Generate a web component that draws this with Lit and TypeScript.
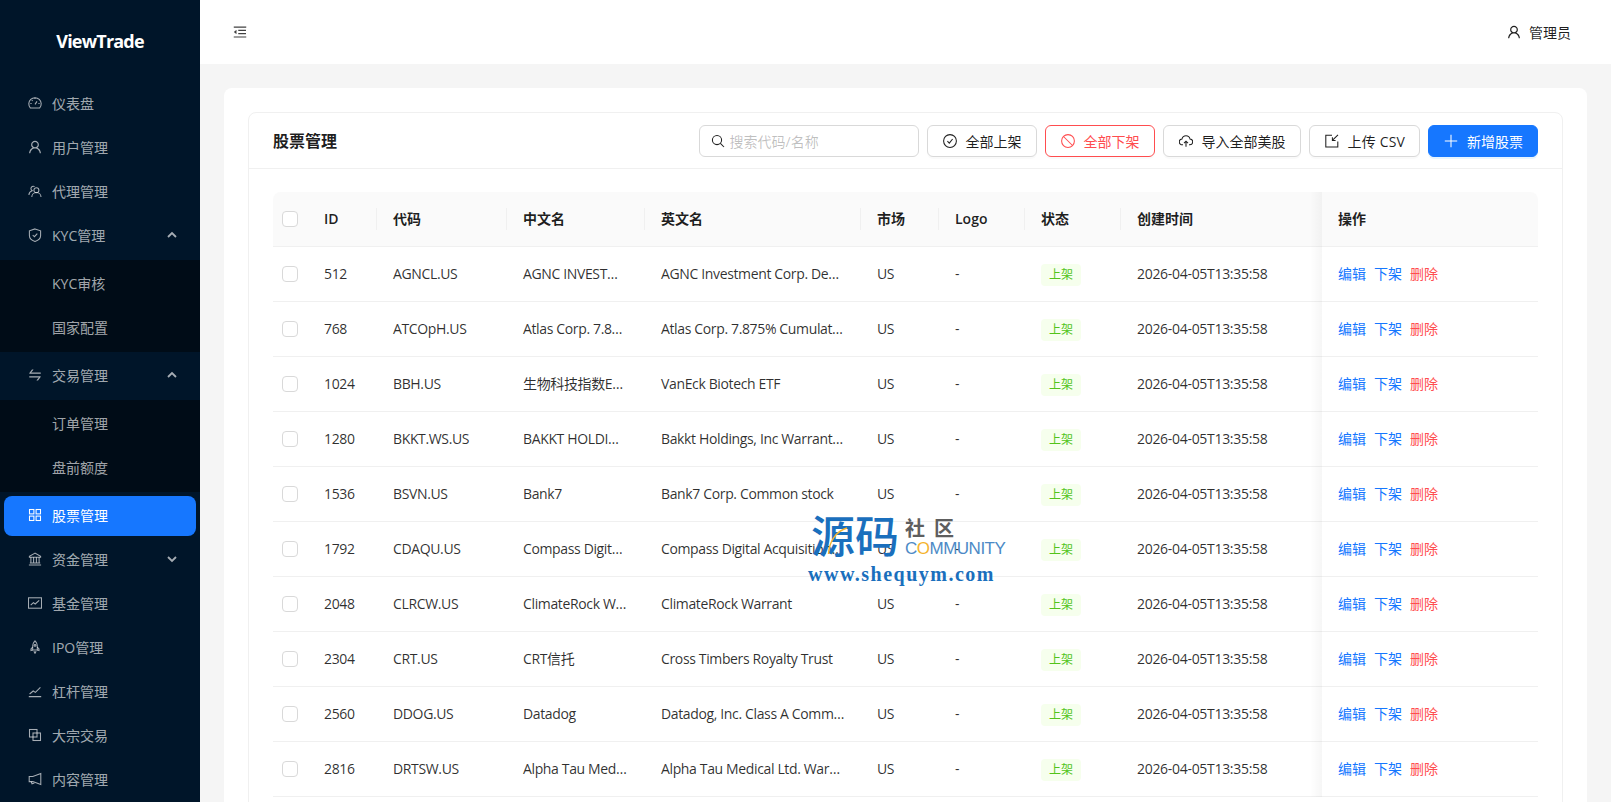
import { LitElement, css, html, svg } from 'lit';
import { customElement } from 'lit/decorators.js';

// Icons drawn on a 14 unit grid with a 1 unit stroke.
const line = (body: unknown, size = 14) => html`<svg class="ico" width=${size} height=${size} viewBox="0 0 14 14" fill="none" stroke="currentColor" stroke-width="1.05">${body}</svg>`;
// Solid icons on the 1024 unit grid.
const solid = (d: string, size = 16) => html`<svg class="ico solid" width=${size} height=${size} viewBox="0 0 1024 1024" fill="currentColor"><path d=${d}></path></svg>`;

const USER_D = 'M858.5 763.6a374 374 0 0 0-80.6-119.5 375.63 375.63 0 0 0-119.5-80.6c-.4-.2-.8-.3-1.2-.5C719.5 518 760 444.7 760 362c0-137-111-248-248-248S264 225 264 362c0 82.7 40.5 156 102.8 201.1-.4.2-.8.3-1.2.5-44.8 18.9-85 46-119.5 80.6a375.63 375.63 0 0 0-80.6 119.5A371.7 371.7 0 0 0 136 901.8a8 8 0 0 0 8 8.2h60c4.4 0 7.9-3.5 8-7.8 2-77.2 33-149.5 87.8-204.3 56.7-56.7 132-87.9 212.2-87.9s155.5 31.2 212.2 87.9C779 752.7 810 825 812 902.2c.1 4.4 3.6 7.8 8 7.8h60a8 8 0 0 0 8-8.2c-1-47.8-10.9-94.3-29.5-138.2zM512 534c-45.9 0-89.1-17.9-121.6-50.4S340 407.9 340 362c0-45.9 17.9-89.1 50.4-121.6S466.1 190 512 190s89.1 17.9 121.6 50.4S684 316.1 684 362c0 45.9-17.9 89.1-50.4 121.6S557.9 534 512 534z';
const SWAP_D = 'M847.9 592H152c-4.4 0-8 3.6-8 8v60c0 4.4 3.6 8 8 8h605.2L612.9 851c-4.1 5.2-.4 13 6.3 13h72.5c4.9 0 9.5-2.2 12.6-6.1l168.8-214.1c16.5-21 1.6-51.8-25.2-51.8zM872 356H266.8l144.3-183c4.1-5.2.4-13-6.3-13h-72.5c-4.9 0-9.5 2.2-12.6 6.1L150.9 380.2c-16.5 21-1.6 51.8 25.1 51.8h696c4.4 0 8-3.6 8-8v-60c0-4.4-3.6-8-8-8z';
const FOLD_D = 'M408 442h480c4.4 0 8-3.6 8-8v-56c0-4.4-3.6-8-8-8H408c-4.4 0-8 3.6-8 8v56c0 4.4 3.6 8 8 8zm-8 204c0 4.4 3.6 8 8 8h480c4.4 0 8-3.6 8-8v-56c0-4.4-3.6-8-8-8H408c-4.4 0-8 3.6-8 8v56zm504-486H120c-4.4 0-8 3.6-8 8v56c0 4.4 3.6 8 8 8h784c4.4 0 8-3.6 8-8v-56c0-4.4-3.6-8-8-8zm0 632H120c-4.4 0-8 3.6-8 8v56c0 4.4 3.6 8 8 8h784c4.4 0 8-3.6 8-8v-56c0-4.4-3.6-8-8-8zM115.4 518.9L271.7 642c5.8 4.6 14.4.5 14.4-6.9V388.9c0-7.4-8.5-11.5-14.4-6.9L115.4 505.1a8.74 8.74 0 0 0 0 13.8z';

const icons = {
  dashboard: line(svg`<path d="M2.3 11.9A6.2 6.2 0 1 1 11.7 11.9Z"/><path d="M7 8.4L9 5.4M7 1.8V3M2.4 7.4H3.6M10.4 7.4H11.6M3.8 4.1L4.6 4.9"/>`),
  user: solid(USER_D),
  team: line(svg`<circle cx="8.4" cy="6.2" r="2.5"/><path d="M3.8 13A4.6 4.6 0 0 1 13 13"/><path d="M6.6 2.6A2.5 2.5 0 0 0 2.9 4.5C2.9 5.5 3.4 6.2 4.2 6.7 2.2 7.3 1 9 .9 11"/>`),
  safety: line(svg`<path d="M7 .9L12.6 2.8V7.4C12.6 10.4 10 12.4 7 13.4 4 12.4 1.4 10.4 1.4 7.4V2.8Z"/><path d="M4.7 7L6.4 8.7 9.3 5.6"/>`),
  swap: solid(SWAP_D),
  store: line(svg`<rect x="1.5" y="1.5" width="4.4" height="4.4"/><rect x="8.1" y="1.5" width="4.4" height="4.4"/><rect x="1.5" y="8.1" width="4.4" height="4.4"/><rect x="8.1" y="8.1" width="4.4" height="4.4"/>`),
  bank: line(svg`<path d="M7 1.1L1.4 4.4V5.3H12.6V4.4Z"/><path d="M2.9 5.3V10.8M5.6 5.3V10.8M8.4 5.3V10.8M11.1 5.3V10.8M1.8 10.9H12.2M.9 12.9H13.1"/>`),
  fund: line(svg`<rect x=".5" y="1.8" width="13" height="10.4"/><path d="M2.7 9.2L5.4 6.6 7.2 8 11.2 4.4"/>`),
  rocket: line(svg`<path d="M7 .8C8.7 2.2 9.3 4 9.3 7V10H4.7V7C4.7 4 5.3 2.2 7 .8Z"/><circle cx="7" cy="5.4" r=".9"/><path d="M4.7 7L3 9V10.6L4.7 10M9.3 7L11 9V10.6L9.3 10M6 11.2C6.3 12.4 6.6 13 7 13.3 7.4 13 7.7 12.4 8 11.2"/>`),
  stock: line(svg`<path d="M.8 12.6H13.2M1.6 10L5.2 7 7.4 8.4 12.4 3.4"/>`),
  block: line(svg`<rect x="1.5" y="1.5" width="7.5" height="7.5"/><rect x="5" y="5" width="7.5" height="7.5"/>`),
  notice: line(svg`<path d="M12.8 1.4V12.4L4.8 9.6H1.2V4.4H4.8Z"/><path d="M3.2 9.6L4 11.8 6.4 11"/>`),
  search: line(svg`<circle cx="6" cy="6" r="4.6"/><path d="M9.4 9.4L13 13"/>`),
  check: line(svg`<circle cx="7" cy="7" r="6.4"/><path d="M4.4 7.2L6.3 9.1 9.6 5"/>`),
  stop: line(svg`<circle cx="7" cy="7" r="6.4"/><path d="M2.5 2.5L11.5 11.5"/>`),
  cloud: line(svg`<path d="M4 10.8H3.4A2.9 2.9 0 0 1 3 5 4.1 4.1 0 0 1 11 5 2.9 2.9 0 0 1 10.6 10.8H10"/><path d="M7 12.8V7.4M5 9.2L7 7.2 9 9.2"/>`),
  csv: line(svg`<path d="M7 1.2H.8V13H12.8V7.5"/><path d="M13 .8L7.6 6.2M7.4 3.2V6.4H10.6"/>`),
  plus: line(svg`<path d="M7 .8V13.2M.8 7H13.2"/>`),
};

const up = html`<svg class="chev" width="10" height="10" viewBox="0 0 10 10" fill="none" stroke="currentColor" stroke-width="1.8"><path d="M1 7L5 3 9 7"></path></svg>`;
const down = html`<svg class="chev" width="10" height="10" viewBox="0 0 10 10" fill="none" stroke="currentColor" stroke-width="1.8"><path d="M1 3L5 7 9 3"></path></svg>`;

type MenuItem = { label: string; icon: unknown; active?: boolean; arrow?: unknown; children?: string[] };

const menu: MenuItem[] = [
  { label: '仪表盘', icon: icons.dashboard },
  { label: '用户管理', icon: icons.user },
  { label: '代理管理', icon: icons.team },
  { label: 'KYC管理', icon: icons.safety, arrow: up, children: ['KYC审核', '国家配置'] },
  { label: '交易管理', icon: icons.swap, arrow: up, children: ['订单管理', '盘前额度'] },
  { label: '股票管理', icon: icons.store, active: true },
  { label: '资金管理', icon: icons.bank, arrow: down },
  { label: '基金管理', icon: icons.fund },
  { label: 'IPO管理', icon: icons.rocket },
  { label: '杠杆管理', icon: icons.stock },
  { label: '大宗交易', icon: icons.block },
  { label: '内容管理', icon: icons.notice },
];

const columns = ['ID', '代码', '中文名', '英文名', '市场', 'Logo', '状态', '创建时间'];

const rows = [
  [512, 'AGNCL.US', 'AGNC INVESTMENT CORP', 'AGNC Investment Corp. Depositary Shares'],
  [768, 'ATCOpH.US', 'Atlas Corp. 7.875%', 'Atlas Corp. 7.875% Cumulative Redeemable'],
  [1024, 'BBH.US', '生物科技指数ETF-VanEck', 'VanEck Biotech ETF'],
  [1280, 'BKKT.WS.US', 'BAKKT HOLDINGS INC', 'Bakkt Holdings, Inc Warrants expiring'],
  [1536, 'BSVN.US', 'Bank7', 'Bank7 Corp. Common stock'],
  [1792, 'CDAQU.US', 'Compass Digital Acquisition', 'Compass Digital Acquisition Corp. Unit'],
  [2048, 'CLRCW.US', 'ClimateRock Warrant', 'ClimateRock Warrant'],
  [2304, 'CRT.US', 'CRT信托', 'Cross Timbers Royalty Trust'],
  [2560, 'DDOG.US', 'Datadog', 'Datadog, Inc. Class A Common Stock'],
  [2816, 'DRTSW.US', 'Alpha Tau Medical Ltd.', 'Alpha Tau Medical Ltd. Warrant Expiring'],
];

@customElement('app-root')
export class AppRoot extends LitElement {
  private renderMenuItem(item: MenuItem) {
    return html`
      <div class="item ${item.active ? 'active' : ''}">
        ${item.icon}
        <span class="label">${item.label}</span>
        ${item.arrow ?? ''}
      </div>
      ${item.children
        ? html`<div class="sub">
            ${item.children.map((c) => html`<div class="item child"><span class="label">${c}</span></div>`)}
          </div>`
        : ''}
    `;
  }

  private renderRow(row: (string | number)[]) {
    return html`
      <tr>
        <td class="sel"><span class="box"></span></td>
        <td class="lat">${row[0]}</td>
        <td class="lat">${row[1]}</td>
        <td class="lat">${row[2]}</td>
        <td class="lat">${row[3]}</td>
        <td class="lat">US</td>
        <td class="lat">-</td>
        <td class="tag-cell"><span class="tag">上架</span></td>
        <td class="time">2026-04-05T13:35:58</td>
        <td class="fixed">
          <span class="acts"><a class="link">编辑</a><a class="link">下架</a><a class="link danger">删除</a></span>
        </td>
      </tr>
    `;
  }

  render() {
    return html`
      <aside class="sider">
        <div class="logo">ViewTrade</div>
        <nav class="menu">${menu.map((m) => this.renderMenuItem(m))}</nav>
      </aside>
      <div class="main">
        <header class="topbar">
          <span class="fold">${solid(FOLD_D, 16)}</span>
          <span class="who">${icons.user}<span>管理员</span></span>
        </header>
        <main class="content">
          <section class="panel">
            <div class="card">
              <div class="card-head">
                <h1 class="title">股票管理</h1>
                <div class="tools">
                  <label class="search">${icons.search}<span class="ph">搜索代码/名称</span></label>
                  <button class="btn">${icons.check}<span>全部上架</span></button>
                  <button class="btn red">${icons.stop}<span>全部下架</span></button>
                  <button class="btn">${icons.cloud}<span>导入全部美股</span></button>
                  <button class="btn csv">${icons.csv}<span>上传 CSV</span></button>
                  <button class="btn primary">${icons.plus}<span>新增股票</span></button>
                </div>
              </div>
              <div class="card-body">
                <table>
                  <colgroup>
                    <col class="c-sel" /><col class="c-id" /><col class="c-code" /><col class="c-cn" /><col class="c-en" />
                    <col class="c-mkt" /><col class="c-logo" /><col class="c-st" /><col class="c-time" /><col class="c-op" />
                  </colgroup>
                  <thead>
                    <tr>
                      <th class="sel"><span class="box"></span></th>
                      ${columns.map((c) => html`<th class="sep"><span>${c}</span></th>`)}
                      <th class="fixed">操作</th>
                    </tr>
                  </thead>
                  <tbody>${rows.map((r) => this.renderRow(r))}</tbody>
                </table>
              </div>
            </div>
          </section>
        </main>
      </div>
      <div class="mark">
        <svg class="arc" width="22" height="30" viewBox="0 0 22 30" fill="none" stroke="#f5b32e" stroke-width="1.4"><path d="M1.5 28C2 16 9 5 20 2"></path></svg>
        <div class="mark-top">
          <span class="mark-big">源码</span>
          <span class="mark-side">
            <span class="mark-cn">社区</span>
            <span class="mark-en">C<i>O</i>MMUNITY</span>
          </span>
        </div>
        <div class="mark-url">www.shequym.com</div>
      </div>
    `;
  }

  static styles = css`
    :host {
      display: flex;
      position: relative;
      width: 100%;
      height: 100vh;
      overflow: hidden;
      background: #f5f5f5;
      font-family: 'Open Sans', 'Noto Sans CJK SC', sans-serif;
      font-size: 14px;
      color: rgba(0, 0, 0, 0.88);
    }

    .ico {
      display: block;
      flex: none;
    }

    /* Sider */
    .sider {
      flex: none;
      width: 200px;
      background: #001529;
      color: rgba(255, 255, 255, 0.65);
    }

    .logo {
      height: 80px;
      padding-top: 1px;
      box-sizing: border-box;
      display: flex;
      align-items: center;
      justify-content: center;
      color: #fff;
      font-size: 18px;
      font-weight: 700;
      letter-spacing: -0.8px;
    }

    .menu {
      padding-top: 4px;
    }

    .item {
      box-sizing: border-box;
      height: 40px;
      margin: 0 4px 4px;
      padding: 0 19px 2px 24px;
      border-radius: 8px;
      display: flex;
      align-items: center;
      gap: 10px;
    }

    .item .solid {
      margin: 0 -1px;
    }

    .label {
      flex: 1;
      white-space: nowrap;
    }

    .chev {
      flex: none;
    }

    .sub {
      background: #000c17;
      padding: 4px 0 0;
      margin-bottom: 4px;
      display: flow-root;
    }

    .item.child {
      padding-left: 48px;
    }

    .item.active {
      background: #1677ff;
      color: #fff;
    }

    /* Main column */
    .main {
      flex: 1;
      min-width: 0;
      display: flex;
      flex-direction: column;
    }

    .topbar {
      flex: none;
      height: 64px;
      background: #fff;
      display: flex;
      align-items: center;
      justify-content: space-between;
      padding: 0 40px 0 32px;
    }

    .fold {
      color: rgba(0, 0, 0, 0.75);
    }

    .who {
      display: flex;
      align-items: center;
      gap: 7px;
    }

    .content {
      flex: 1;
      min-height: 0;
      padding: 24px 24px 0;
    }

    .panel {
      background: #fff;
      border-radius: 8px 8px 0 0;
      padding: 24px;
    }

    .card {
      border: 1px solid #f0f0f0;
      border-radius: 8px;
      background: #fff;
    }

    .card-head {
      height: 55px;
      border-bottom: 1px solid #f0f0f0;
      display: flex;
      align-items: center;
      justify-content: space-between;
      padding: 0 24px;
    }

    .title {
      margin: -2px 0 0;
      font-size: 16px;
      font-weight: 600;
    }

    .tools {
      display: flex;
      gap: 8px;
    }

    .search {
      width: 220px;
      height: 32px;
      box-sizing: border-box;
      border: 1px solid #d9d9d9;
      border-radius: 6px;
      padding: 0 11px;
      display: flex;
      align-items: center;
      gap: 5px;
    }

    .ph {
      color: rgba(0, 0, 0, 0.25);
    }

    .btn {
      height: 32px;
      box-sizing: border-box;
      padding: 0 14px 0 15px;
      border: 1px solid #d9d9d9;
      border-radius: 6px;
      background: #fff;
      color: rgba(0, 0, 0, 0.88);
      font: inherit;
      display: flex;
      align-items: center;
      gap: 9px;
      white-space: nowrap;
      box-shadow: 0 2px 0 rgba(0, 0, 0, 0.02);
    }

    .btn.csv {
      letter-spacing: 0.15px;
    }

    .btn.red {
      border-color: #ff4d4f;
      color: #ff4d4f;
    }

    .btn.primary {
      background: #1677ff;
      border-color: #1677ff;
      color: #fff;
      box-shadow: 0 2px 0 rgba(5, 145, 255, 0.1);
    }

    .card-body {
      padding: 23px 24px 24px;
    }

    /* Table */
    table {
      width: 100%;
      table-layout: fixed;
      border-collapse: separate;
      border-spacing: 0;
    }

    .c-sel { width: 35px; }
    .c-id { width: 69px; }
    .c-code { width: 130px; }
    .c-cn { width: 138px; }
    .c-en { width: 216px; }
    .c-mkt { width: 78px; }
    .c-logo { width: 86px; }
    .c-st { width: 96px; }
    .c-time { width: 201px; }
    .c-op { width: 216px; }

    th,
    td {
      box-sizing: border-box;
      height: 55px;
      padding: 0 16px 2px;
      border-bottom: 1px solid #f0f0f0;
      text-align: left;
      white-space: nowrap;
      overflow: hidden;
      text-overflow: ellipsis;
    }

    th {
      background: #fafafa;
      font-weight: 600;
      position: relative;
    }

    .lat {
      letter-spacing: -0.36px;
      color: rgba(0, 0, 0, 0.82);
    }

    .time {
      letter-spacing: -0.3px;
      color: rgba(0, 0, 0, 0.82);
    }

    th:first-child {
      border-top-left-radius: 8px;
    }

    th:last-child {
      border-top-right-radius: 8px;
    }

    .sep::after {
      content: '';
      position: absolute;
      top: 16px;
      bottom: 16px;
      right: 0;
      width: 1px;
      background: #f0f0f0;
    }

    th:nth-child(9)::after {
      display: none;
    }

    .sel {
      padding: 0;
    }

    .box {
      display: block;
      margin-left: 9px;
      width: 16px;
      height: 16px;
      box-sizing: border-box;
      border: 1px solid #d9d9d9;
      border-radius: 4px;
      background: #fff;
    }

    .tag-cell {
      padding-top: 2px;
      padding-bottom: 0;
    }

    .tag {
      display: block;
      width: 40px;
      height: 22px;
      line-height: 22px;
      text-align: center;
      font-size: 12px;
      border-radius: 4px;
      background: #f6ffed;
      color: #52c41a;
    }

    .fixed {
      position: relative;
      overflow: visible;
    }

    .fixed::before {
      content: '';
      position: absolute;
      top: 0;
      bottom: -1px;
      left: -12px;
      width: 12px;
      background: linear-gradient(to right, rgba(5, 5, 5, 0), rgba(5, 5, 5, 0.035));
    }

    .acts {
      display: flex;
      gap: 8px;
    }

    .link {
      color: #1677ff;
    }

    .link.danger {
      color: #ff4d4f;
    }

    /* Watermark floating over the table */
    .mark {
      position: absolute;
      left: 808px;
      top: 508px;
      width: 200px;
      color: #1a6fbd;
      pointer-events: none;
    }

    .arc {
      position: absolute;
      left: 19px;
      top: 18px;
    }

    .mark-top {
      display: flex;
      gap: 6px;
      padding-left: 3px;
    }

    .mark-big {
      font-size: 44px;
      line-height: 56px;
      font-weight: 500;
      white-space: nowrap;
    }

    .mark-side {
      display: flex;
      flex-direction: column;
      padding-top: 11px;
    }

    .mark-cn {
      font-size: 20px;
      line-height: 20px;
      font-weight: 700;
      letter-spacing: 9px;
      color: #5e5e5e;
    }

    .mark-en {
      font-family: 'Liberation Sans', sans-serif;
      font-size: 17px;
      line-height: 20px;
      letter-spacing: -0.5px;
      color: #4d8ac6;
      white-space: nowrap;
    }

    .mark-en i {
      font-style: normal;
      color: #f5b32e;
    }

    .mark-url {
      font-family: 'Liberation Serif', serif;
      font-size: 20px;
      font-weight: 700;
      line-height: 20px;
      letter-spacing: 1.5px;
      white-space: nowrap;
    }
  `;
}
